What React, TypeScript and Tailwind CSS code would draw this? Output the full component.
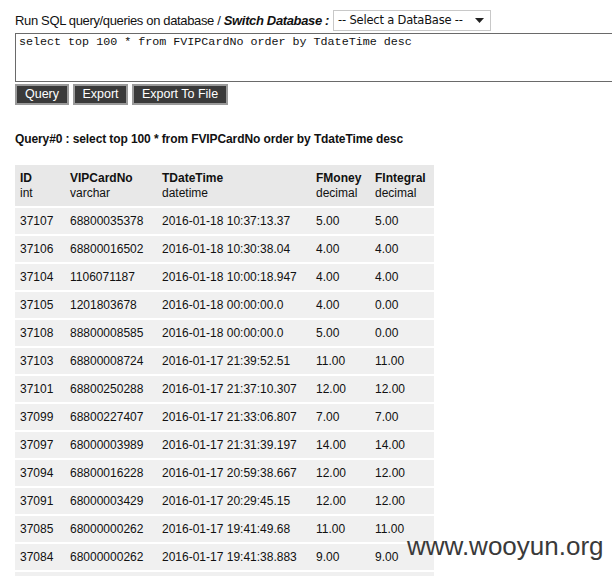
const rows = [
  ['37107', '68800035378', '2016-01-18 10:37:13.37', '5.00', '5.00'],
  ['37106', '68800016502', '2016-01-18 10:30:38.04', '4.00', '4.00'],
  ['37104', '1106071187', '2016-01-18 10:00:18.947', '4.00', '4.00'],
  ['37105', '1201803678', '2016-01-18 00:00:00.0', '4.00', '0.00'],
  ['37108', '88800008585', '2016-01-18 00:00:00.0', '5.00', '0.00'],
  ['37103', '68800008724', '2016-01-17 21:39:52.51', '11.00', '11.00'],
  ['37101', '68800250288', '2016-01-17 21:37:10.307', '12.00', '12.00'],
  ['37099', '68800227407', '2016-01-17 21:33:06.807', '7.00', '7.00'],
  ['37097', '68000003989', '2016-01-17 21:31:39.197', '14.00', '14.00'],
  ['37094', '68800016228', '2016-01-17 20:59:38.667', '12.00', '12.00'],
  ['37091', '68000003429', '2016-01-17 20:29:45.15', '12.00', '12.00'],
  ['37085', '68000000262', '2016-01-17 19:41:49.68', '11.00', '11.00'],
  ['37084', '68000000262', '2016-01-17 19:41:38.883', '9.00', '9.00'],
  ['', '', '', '', ''],
];

const cols = [
  { name: 'ID', type: 'int', w: 'w-[50px]' },
  { name: 'VIPCardNo', type: 'varchar', w: 'w-[92px]' },
  { name: 'TDateTime', type: 'datetime', w: 'w-[154px]' },
  { name: 'FMoney', type: 'decimal', w: 'w-[59px]' },
  { name: 'FIntegral', type: 'decimal', w: 'w-[64px]' },
];

function Button({ label, w }: { label: string; w: string }) {
  return (
    <button
      className={`${w} h-[21px] bg-[#3a3a3a] text-white text-[12.5px] border-2 border-[#9a9a9a] leading-none`}
    >
      {label}
    </button>
  );
}

export default function App() {
  return (
    <div
      className="relative h-[576px] w-[612px] overflow-hidden bg-white pl-[15px] pt-[10px] text-[#111]"
      style={{ fontFamily: '"Liberation Sans", Arial, sans-serif' }}
    >
      <div className="flex h-[21px] items-center text-[13px] tracking-[-0.35px]">
        <span>Run SQL query/queries on database /&nbsp;</span>
        <b className="italic">Switch Database :</b>
        <div className="ml-[4px] flex h-[21px] w-[158px] items-center justify-between border border-[#c8c8c8] bg-white pl-[4px] pr-[6px] tracking-normal">
          <span style={{ fontFamily: '"DejaVu Sans", Verdana, sans-serif' }} className="text-[11.5px] tracking-[-0.2px]">
            -- Select a DataBase --
          </span>
          <svg width="9" height="5" viewBox="0 0 9 5">
            <path d="M0 0H9L4.5 5Z" fill="#222" />
          </svg>
        </div>
      </div>
      <div
        className="relative mt-[2px] h-[49px] w-[620px] border border-[#6a6a6a] px-[3px] pt-[1px] text-[11.7px] leading-[14px]"
        style={{ fontFamily: '"Liberation Mono", "Courier New", monospace' }}
      >
        select top 100 * from FVIPCardNo order by TdateTime desc
        <svg className="absolute bottom-[3px] right-[10px]" width="7" height="7" viewBox="0 0 7 7">
          <rect x="5" y="0" width="1" height="1" fill="#999" />
          <rect x="3" y="3" width="1" height="1" fill="#999" />
          <rect x="5" y="3" width="1" height="1" fill="#999" />
          <rect x="0" y="5" width="1" height="1" fill="#999" />
          <rect x="3" y="5" width="1" height="1" fill="#999" />
          <rect x="5" y="5" width="1" height="1" fill="#999" />
        </svg>
      </div>
      <div className="mt-[2px] flex gap-[4px]">
        <Button label="Query" w="w-[54px]" />
        <Button label="Export" w="w-[55px]" />
        <Button label="Export To File" w="w-[96px]" />
      </div>
      <div className="mt-[27px] text-[12px] font-bold leading-[14px] tracking-[-0.1px]">
        Query#0 : select top 100 * from FVIPCardNo order by TdateTime desc
      </div>
      <table className="mt-[19px] border-collapse text-[12px] leading-[15px]">
        <thead>
          <tr className="h-[42px] bg-[#e8e8e8]">
            {cols.map((c) => (
              <th key={c.name} className={`${c.w} pl-[5px] text-left align-middle`}>
                <div className="font-bold">{c.name}</div>
                <div className="font-normal">{c.type}</div>
              </th>
            ))}
          </tr>
        </thead>
        <tbody>
          {rows.map((r, i) => (
            <tr key={i} className="h-[28px] border-t-2 border-white bg-[#f0f0f0] shadow-[inset_0_1px_0_#dedede]">
              {r.map((v, j) => (
                <td key={j} className="pl-[5px] align-middle whitespace-nowrap">
                  {v}
                </td>
              ))}
            </tr>
          ))}
        </tbody>
      </table>
      <div className="absolute left-[407px] top-[531px] text-[26px] leading-[30px] text-[#3a3a3a]">
        www.wooyun.org
      </div>
    </div>
  );
}
